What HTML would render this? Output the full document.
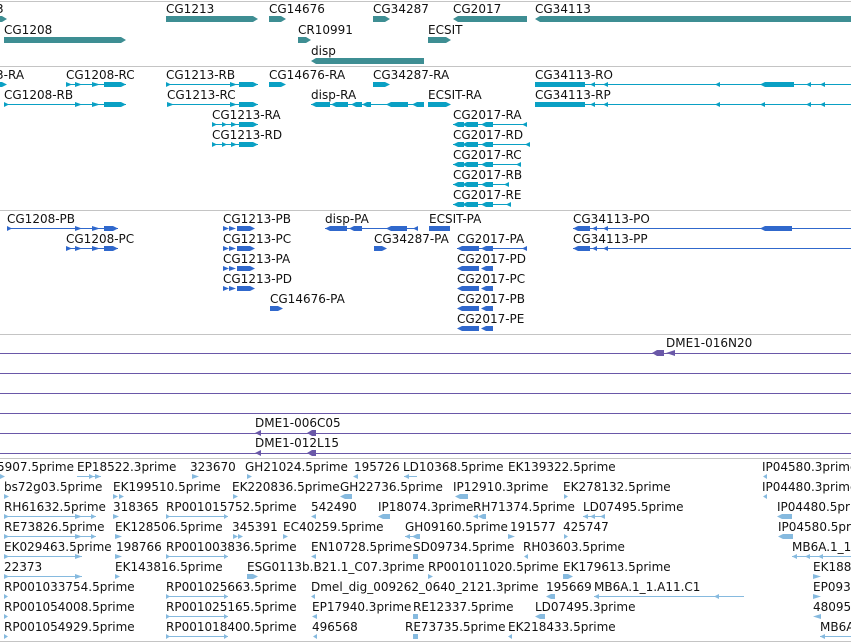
<!DOCTYPE html>
<html><head><meta charset="utf-8"><style>
html,body{margin:0;padding:0;overflow:hidden}
body{width:851px;height:642px;background:#fff}
#w{position:relative;width:851px;height:642px;overflow:hidden}
.t{position:absolute;font:12px/12px "DejaVu Sans",sans-serif;color:#111;white-space:nowrap}
.b{position:absolute;height:5px}
.h{height:6px}
.l{position:absolute;height:1px}
.s{position:absolute;left:0;width:851px;height:1px;background:#c4c4c4}
.u{position:absolute;left:0;width:851px;height:1px;background:#6a58a8}
.g{background:#3e8e93}.c{background:#0aa0c4}.p{background:#3068cc}.e{background:#86badf}.v{background:#6a58a8}
.r{clip-path:polygon(0 0,calc(100% - 5px) 0,100% 50%,calc(100% - 5px) 100%,0 100%)}
.f{clip-path:polygon(5px 0,100% 0,100% 100%,5px 100%,0 50%)}
.ar{clip-path:polygon(0 0,100% 50%,0 100%)}
.al{clip-path:polygon(100% 0,0 50%,100% 100%)}
</style></head><body><div id="w">
<div class="s" style="top:1px"></div>
<div class="s" style="top:66px"></div>
<div class="s" style="top:210px"></div>
<div class="s" style="top:334px"></div>
<div class="s" style="top:458px"></div>
<div class="s" style="top:641px"></div>

<div class="t" style="left:-4px;top:3px">3</div><i class="b h g r" style="left:0;top:16px;width:7px"></i>
<div class="t" style="left:166px;top:3px">CG1213</div><i class="b h g r" style="left:166px;top:16px;width:92px"></i>
<div class="t" style="left:269px;top:3px">CG14676</div><i class="b h g r" style="left:269px;top:16px;width:17px"></i>
<div class="t" style="left:373px;top:3px">CG34287</div><i class="b h g r" style="left:373px;top:16px;width:17px"></i>
<div class="t" style="left:453px;top:3px">CG2017</div><i class="b h g f" style="left:453px;top:16px;width:74px"></i>
<div class="t" style="left:535px;top:3px">CG34113</div><i class="b h g f" style="left:535px;top:16px;width:316px"></i>
<div class="t" style="left:4px;top:24px">CG1208</div><i class="b h g r" style="left:4px;top:37px;width:122px"></i>
<div class="t" style="left:298px;top:24px">CR10991</div><i class="b h g r" style="left:298px;top:37px;width:13px"></i>
<div class="t" style="left:428px;top:24px">ECSIT</div><i class="b h g r" style="left:428px;top:37px;width:23px"></i>
<div class="t" style="left:311px;top:45px">disp</div><i class="b h g f" style="left:311px;top:58px;width:113px"></i>

<div class="t" style="left:-4px;top:69px">3-RA</div><i class="b c r" style="left:0;top:82px;width:7px"></i>
<div class="t" style="left:66px;top:69px">CG1208-RC</div>
<i class="l c" style="left:66px;top:84px;width:60px"></i><i class="b c ar" style="left:66px;top:82px;width:6px"></i><i class="b c ar" style="left:75px;top:82px;width:7px"></i><i class="b c ar" style="left:92px;top:82px;width:8px"></i><i class="b c r" style="left:104px;top:82px;width:22px"></i>
<div class="t" style="left:166px;top:69px">CG1213-RB</div>
<i class="l c" style="left:166px;top:84px;width:92px"></i><i class="b c ar" style="left:166px;top:82px;width:5px"></i><i class="b c ar" style="left:230px;top:82px;width:7px"></i><i class="b c r" style="left:239px;top:82px;width:19px"></i>
<div class="t" style="left:269px;top:69px">CG14676-RA</div><i class="b c r" style="left:269px;top:82px;width:17px"></i>
<div class="t" style="left:373px;top:69px">CG34287-RA</div><i class="b c r" style="left:373px;top:82px;width:17px"></i>
<div class="t" style="left:535px;top:69px">CG34113-RO</div>
<i class="l c" style="left:535px;top:84px;width:316px"></i><i class="b c" style="left:535px;top:82px;width:50px"></i><i class="b c al" style="left:590px;top:82px;width:5px"></i><i class="b c al" style="left:603px;top:82px;width:5px"></i><i class="b c al" style="left:715px;top:82px;width:5px"></i><i class="b c f" style="left:760px;top:82px;width:34px"></i><i class="b c al" style="left:806px;top:82px;width:5px"></i><i class="b c al" style="left:820px;top:82px;width:5px"></i>

<div class="t" style="left:4px;top:89px">CG1208-RB</div>
<i class="l c" style="left:4px;top:104px;width:122px"></i><i class="b c ar" style="left:4px;top:102px;width:5px"></i><i class="b c ar" style="left:75px;top:102px;width:7px"></i><i class="b c ar" style="left:92px;top:102px;width:8px"></i><i class="b c r" style="left:104px;top:102px;width:22px"></i>
<div class="t" style="left:167px;top:89px">CG1213-RC</div>
<i class="l c" style="left:167px;top:104px;width:91px"></i><i class="b c ar" style="left:167px;top:102px;width:7px"></i><i class="b c ar" style="left:230px;top:102px;width:7px"></i><i class="b c r" style="left:239px;top:102px;width:19px"></i>
<div class="t" style="left:311px;top:89px">disp-RA</div>
<i class="l c" style="left:311px;top:104px;width:113px"></i><i class="b c f" style="left:311px;top:102px;width:19px"></i><i class="b c f" style="left:331px;top:102px;width:17px"></i><i class="b c f" style="left:351px;top:102px;width:11px"></i><i class="b c f" style="left:362px;top:102px;width:9px"></i><i class="b c f" style="left:386px;top:102px;width:22px"></i><i class="b c f" style="left:412px;top:102px;width:12px"></i>
<div class="t" style="left:428px;top:89px">ECSIT-RA</div><i class="b c r" style="left:428px;top:102px;width:23px"></i>
<div class="t" style="left:535px;top:89px">CG34113-RP</div>
<i class="l c" style="left:535px;top:104px;width:316px"></i><i class="b c" style="left:535px;top:102px;width:50px"></i><i class="b c al" style="left:590px;top:102px;width:5px"></i><i class="b c al" style="left:603px;top:102px;width:5px"></i><i class="b c al" style="left:715px;top:102px;width:5px"></i><i class="b c al" style="left:760px;top:102px;width:5px"></i><i class="b c al" style="left:806px;top:102px;width:5px"></i><i class="b c al" style="left:820px;top:102px;width:5px"></i>

<div class="t" style="left:212px;top:109px">CG1213-RA</div>
<i class="l c" style="left:212px;top:124px;width:46px"></i><i class="b c ar" style="left:212px;top:122px;width:5px"></i><i class="b c ar" style="left:222px;top:122px;width:5px"></i><i class="b c ar" style="left:231px;top:122px;width:6px"></i><i class="b c r" style="left:239px;top:122px;width:19px"></i>
<div class="t" style="left:212px;top:129px">CG1213-RD</div>
<i class="l c" style="left:212px;top:144px;width:46px"></i><i class="b c ar" style="left:212px;top:142px;width:5px"></i><i class="b c ar" style="left:222px;top:142px;width:5px"></i><i class="b c ar" style="left:231px;top:142px;width:6px"></i><i class="b c r" style="left:239px;top:142px;width:19px"></i>

<div class="t" style="left:453px;top:109px">CG2017-RA</div><i class="l c" style="left:453px;top:124px;width:74px"></i><i class="b c f" style="left:453px;top:122px;width:11px"></i><i class="b c f" style="left:462px;top:122px;width:16px"></i><i class="b c f" style="left:481px;top:122px;width:12px"></i><i class="b c al" style="left:522px;top:122px;width:5px"></i>
<div class="t" style="left:453px;top:129px">CG2017-RD</div><i class="l c" style="left:453px;top:144px;width:77px"></i><i class="b c f" style="left:453px;top:142px;width:11px"></i><i class="b c f" style="left:462px;top:142px;width:16px"></i><i class="b c f" style="left:481px;top:142px;width:12px"></i><i class="b c al" style="left:525px;top:142px;width:5px"></i>
<div class="t" style="left:453px;top:149px">CG2017-RC</div><i class="l c" style="left:453px;top:164px;width:68px"></i><i class="b c f" style="left:453px;top:162px;width:11px"></i><i class="b c f" style="left:462px;top:162px;width:16px"></i><i class="b c f" style="left:481px;top:162px;width:12px"></i><i class="b c al" style="left:516px;top:162px;width:5px"></i>
<div class="t" style="left:453px;top:169px">CG2017-RB</div><i class="l c" style="left:453px;top:184px;width:56px"></i><i class="b c f" style="left:453px;top:182px;width:11px"></i><i class="b c f" style="left:462px;top:182px;width:16px"></i><i class="b c f" style="left:481px;top:182px;width:12px"></i><i class="b c al" style="left:504px;top:182px;width:5px"></i>
<div class="t" style="left:453px;top:189px">CG2017-RE</div><i class="l c" style="left:453px;top:204px;width:58px"></i><i class="b c f" style="left:453px;top:202px;width:11px"></i><i class="b c f" style="left:462px;top:202px;width:16px"></i><i class="b c f" style="left:481px;top:202px;width:12px"></i><i class="b c al" style="left:506px;top:202px;width:5px"></i>

<div class="t" style="left:7px;top:213px">CG1208-PB</div>
<i class="l p" style="left:7px;top:228px;width:111px"></i><i class="b p ar" style="left:7px;top:226px;width:5px"></i><i class="b p ar" style="left:75px;top:226px;width:7px"></i><i class="b p ar" style="left:92px;top:226px;width:8px"></i><i class="b p r" style="left:104px;top:226px;width:14px"></i>
<div class="t" style="left:223px;top:213px">CG1213-PB</div><i class="b p ar" style="left:223px;top:226px;width:6px"></i><i class="b p ar" style="left:229px;top:226px;width:7px"></i><i class="b p r" style="left:237px;top:226px;width:18px"></i>
<div class="t" style="left:325px;top:213px">disp-PA</div><i class="l p" style="left:325px;top:228px;width:93px"></i><i class="b p f" style="left:325px;top:226px;width:22px"></i><i class="b p f" style="left:349px;top:226px;width:13px"></i><i class="b p f" style="left:386px;top:226px;width:21px"></i><i class="b p al" style="left:413px;top:226px;width:5px"></i>
<div class="t" style="left:429px;top:213px">ECSIT-PA</div><i class="b p" style="left:429px;top:226px;width:21px"></i>
<div class="t" style="left:573px;top:213px">CG34113-PO</div><i class="l p" style="left:573px;top:228px;width:278px"></i><i class="b p f" style="left:573px;top:226px;width:17px"></i><i class="b p al" style="left:592px;top:226px;width:5px"></i><i class="b p al" style="left:603px;top:226px;width:5px"></i><i class="b p f" style="left:760px;top:226px;width:32px"></i>

<div class="t" style="left:66px;top:233px">CG1208-PC</div>
<i class="l p" style="left:66px;top:248px;width:52px"></i><i class="b p ar" style="left:66px;top:246px;width:6px"></i><i class="b p ar" style="left:75px;top:246px;width:7px"></i><i class="b p ar" style="left:92px;top:246px;width:8px"></i><i class="b p r" style="left:104px;top:246px;width:14px"></i>
<div class="t" style="left:223px;top:233px">CG1213-PC</div><i class="b p ar" style="left:223px;top:246px;width:6px"></i><i class="b p ar" style="left:229px;top:246px;width:7px"></i><i class="b p r" style="left:237px;top:246px;width:18px"></i>
<div class="t" style="left:374px;top:233px">CG34287-PA</div><i class="b p r" style="left:374px;top:246px;width:13px"></i>
<div class="t" style="left:457px;top:233px">CG2017-PA</div><i class="l p" style="left:457px;top:248px;width:70px"></i><i class="b p f" style="left:457px;top:246px;width:22px"></i><i class="b p f" style="left:481px;top:246px;width:12px"></i><i class="b p al" style="left:522px;top:246px;width:5px"></i>
<div class="t" style="left:573px;top:233px">CG34113-PP</div><i class="l p" style="left:573px;top:248px;width:278px"></i><i class="b p f" style="left:573px;top:246px;width:17px"></i><i class="b p al" style="left:592px;top:246px;width:5px"></i><i class="b p al" style="left:603px;top:246px;width:5px"></i>

<div class="t" style="left:223px;top:253px">CG1213-PA</div><i class="b p ar" style="left:223px;top:266px;width:6px"></i><i class="b p ar" style="left:229px;top:266px;width:7px"></i><i class="b p r" style="left:237px;top:266px;width:18px"></i>
<div class="t" style="left:457px;top:253px">CG2017-PD</div><i class="b p f" style="left:457px;top:266px;width:22px"></i><i class="b p f" style="left:481px;top:266px;width:12px"></i>
<div class="t" style="left:223px;top:273px">CG1213-PD</div><i class="b p ar" style="left:223px;top:286px;width:6px"></i><i class="b p ar" style="left:229px;top:286px;width:7px"></i><i class="b p r" style="left:237px;top:286px;width:18px"></i>
<div class="t" style="left:457px;top:273px">CG2017-PC</div><i class="b p f" style="left:457px;top:286px;width:22px"></i><i class="b p f" style="left:481px;top:286px;width:12px"></i>
<div class="t" style="left:270px;top:293px">CG14676-PA</div><i class="b p r" style="left:270px;top:306px;width:13px"></i>
<div class="t" style="left:457px;top:293px">CG2017-PB</div><i class="b p f" style="left:457px;top:306px;width:22px"></i><i class="b p f" style="left:481px;top:306px;width:12px"></i>
<div class="t" style="left:457px;top:313px">CG2017-PE</div><i class="b p f" style="left:457px;top:326px;width:22px"></i><i class="b p f" style="left:481px;top:326px;width:12px"></i>

<div class="u" style="top:353px"></div><div class="u" style="top:373px"></div><div class="u" style="top:393px"></div><div class="u" style="top:413px"></div><div class="u" style="top:433px"></div><div class="u" style="top:453px"></div>
<div class="t" style="left:666px;top:337px">DME1-016N20</div><i class="b h v f" style="left:652px;top:350px;width:12px"></i><i class="b h v al" style="left:666px;top:350px;width:9px"></i>
<div class="t" style="left:255px;top:417px">DME1-006C05</div><i class="b h v al" style="left:255px;top:430px;width:6px"></i><i class="b h v f" style="left:307px;top:430px;width:9px"></i>
<div class="t" style="left:255px;top:437px">DME1-012L15</div><i class="b h v al" style="left:255px;top:450px;width:6px"></i><i class="b h v f" style="left:307px;top:450px;width:9px"></i>

<div class="t" style="left:-3px;top:461px">5907.5prime</div><i class="b e ar" style="left:0;top:474px;width:5px"></i>
<div class="t" style="left:77px;top:461px">EP18522.3prime</div><i class="l e" style="left:77px;top:476px;width:24px"></i><i class="b e ar" style="left:89px;top:474px;width:5px"></i><i class="b e ar" style="left:95px;top:474px;width:6px"></i>
<div class="t" style="left:190px;top:461px">323670</div><i class="b e ar" style="left:192px;top:474px;width:7px"></i>
<div class="t" style="left:245px;top:461px">GH21024.5prime</div><i class="b e ar" style="left:247px;top:474px;width:5px"></i>
<div class="t" style="left:354px;top:461px">195726</div><i class="b e al" style="left:353px;top:474px;width:5px"></i>
<div class="t" style="left:403px;top:461px">LD10368.5prime</div><i class="l e" style="left:404px;top:476px;width:13px"></i><i class="b e al" style="left:404px;top:474px;width:5px"></i>
<div class="t" style="left:508px;top:461px">EK139322.5prime</div>
<div class="t" style="left:762px;top:461px">IP04580.3prime</div><i class="b e al" style="left:763px;top:474px;width:4px"></i>

<div class="t" style="left:4px;top:481px">bs72g03.5prime</div><i class="b e ar" style="left:4px;top:494px;width:5px"></i>
<div class="t" style="left:113px;top:481px">EK199510.5prime</div><i class="b e ar" style="left:113px;top:494px;width:5px"></i><i class="b e ar" style="left:119px;top:494px;width:5px"></i>
<div class="t" style="left:232px;top:481px">EK220836.5prime</div><i class="b e ar" style="left:233px;top:494px;width:5px"></i>
<div class="t" style="left:340px;top:481px">GH22736.5prime</div><i class="b e f" style="left:340px;top:494px;width:12px"></i>
<div class="t" style="left:453px;top:481px">IP12910.3prime</div><i class="b e f" style="left:455px;top:494px;width:13px"></i>
<div class="t" style="left:563px;top:481px">EK278132.5prime</div><i class="b e ar" style="left:564px;top:494px;width:4px"></i>
<div class="t" style="left:762px;top:481px">IP04480.3prime</div><i class="b e al" style="left:763px;top:494px;width:4px"></i>

<div class="t" style="left:4px;top:501px">RH61632.5prime</div><i class="l e" style="left:4px;top:516px;width:92px"></i><i class="b e ar" style="left:4px;top:514px;width:5px"></i><i class="b e ar" style="left:75px;top:514px;width:7px"></i><i class="b e ar" style="left:91px;top:514px;width:5px"></i>
<div class="t" style="left:113px;top:501px">318365</div><i class="b e ar" style="left:113px;top:514px;width:6px"></i>
<div class="t" style="left:166px;top:501px">RP001015752.5prime</div><i class="l e" style="left:166px;top:516px;width:62px"></i><i class="b e ar" style="left:166px;top:514px;width:4px"></i><i class="b e ar" style="left:224px;top:514px;width:4px"></i>
<div class="t" style="left:311px;top:501px">542490</div><i class="b e al" style="left:311px;top:514px;width:5px"></i>
<div class="t" style="left:378px;top:501px">IP18074.3prime</div><i class="b e f" style="left:378px;top:514px;width:12px"></i>
<div class="t" style="left:473px;top:501px">RH71374.5prime</div><i class="b e al" style="left:473px;top:514px;width:5px"></i><i class="b e f" style="left:478px;top:514px;width:8px"></i>
<div class="t" style="left:583px;top:501px">LD07495.5prime</div><i class="l e" style="left:583px;top:516px;width:22px"></i><i class="b e al" style="left:583px;top:514px;width:5px"></i><i class="b e al" style="left:590px;top:514px;width:5px"></i><i class="b e al" style="left:600px;top:514px;width:5px"></i>
<div class="t" style="left:777px;top:501px">IP04480.5prime</div><i class="b e f" style="left:777px;top:514px;width:15px"></i>

<div class="t" style="left:4px;top:521px">RE73826.5prime</div><i class="l e" style="left:4px;top:536px;width:92px"></i><i class="b e ar" style="left:4px;top:534px;width:5px"></i><i class="b e ar" style="left:75px;top:534px;width:7px"></i><i class="b e ar" style="left:91px;top:534px;width:5px"></i>
<div class="t" style="left:115px;top:521px">EK128506.5prime</div><i class="b e ar" style="left:115px;top:534px;width:7px"></i>
<div class="t" style="left:232px;top:521px">345391</div><i class="b e ar" style="left:233px;top:534px;width:5px"></i><i class="b e ar" style="left:238px;top:534px;width:5px"></i>
<div class="t" style="left:283px;top:521px">EC40259.5prime</div><i class="b e ar" style="left:283px;top:534px;width:5px"></i>
<div class="t" style="left:405px;top:521px">GH09160.5prime</div><i class="l e" style="left:405px;top:536px;width:14px"></i><i class="b e al" style="left:405px;top:534px;width:5px"></i><i class="b e f" style="left:412px;top:534px;width:8px"></i>
<div class="t" style="left:510px;top:521px">191577</div><i class="b e ar" style="left:508px;top:534px;width:7px"></i>
<div class="t" style="left:563px;top:521px">425747</div><i class="b e ar" style="left:564px;top:534px;width:4px"></i>
<div class="t" style="left:778px;top:521px">IP04580.5prime</div><i class="b e f" style="left:778px;top:534px;width:15px"></i>

<div class="t" style="left:4px;top:541px">EK029463.5prime</div><i class="l e" style="left:4px;top:556px;width:78px"></i><i class="b e ar" style="left:4px;top:554px;width:5px"></i><i class="b e ar" style="left:75px;top:554px;width:7px"></i>
<div class="t" style="left:116px;top:541px">198766</div><i class="b e ar" style="left:115px;top:554px;width:7px"></i>
<div class="t" style="left:166px;top:541px">RP001003836.5prime</div><i class="l e" style="left:166px;top:556px;width:62px"></i><i class="b e ar" style="left:166px;top:554px;width:4px"></i><i class="b e ar" style="left:224px;top:554px;width:4px"></i>
<div class="t" style="left:311px;top:541px">EN10728.5prime</div><i class="b e al" style="left:311px;top:554px;width:5px"></i>
<div class="t" style="left:413px;top:541px">SD09734.5prime</div><i class="b e" style="left:413px;top:554px;width:5px"></i>
<div class="t" style="left:523px;top:541px">RH03603.5prime</div><i class="b e al" style="left:524px;top:554px;width:4px"></i>
<div class="t" style="left:792px;top:541px">MB6A.1_1.A11.C1</div><i class="l e" style="left:792px;top:556px;width:59px"></i><i class="b e al" style="left:792px;top:554px;width:5px"></i><i class="b e al" style="left:805px;top:554px;width:5px"></i><i class="b e al" style="left:818px;top:554px;width:5px"></i>

<div class="t" style="left:4px;top:561px">22373</div><i class="l e" style="left:4px;top:576px;width:78px"></i><i class="b e ar" style="left:4px;top:574px;width:5px"></i><i class="b e ar" style="left:75px;top:574px;width:7px"></i>
<div class="t" style="left:115px;top:561px">EK143816.5prime</div><i class="b e ar" style="left:115px;top:574px;width:5px"></i>
<div class="t" style="left:247px;top:561px">ESG0113b.B21.1_C07.3prime</div><i class="b e r" style="left:247px;top:574px;width:11px"></i>
<div class="t" style="left:428px;top:561px">RP001011020.5prime</div><i class="b e ar" style="left:428px;top:574px;width:5px"></i>
<div class="t" style="left:563px;top:561px">EK179613.5prime</div><i class="b e r" style="left:563px;top:574px;width:10px"></i>
<div class="t" style="left:813px;top:561px">EK188</div><i class="b e ar" style="left:813px;top:574px;width:8px"></i>

<div class="t" style="left:4px;top:581px">RP001033754.5prime</div><i class="b e ar" style="left:4px;top:594px;width:4px"></i>
<div class="t" style="left:166px;top:581px">RP001025663.5prime</div><i class="l e" style="left:166px;top:596px;width:62px"></i><i class="b e ar" style="left:166px;top:594px;width:4px"></i><i class="b e ar" style="left:224px;top:594px;width:4px"></i>
<div class="t" style="left:311px;top:581px">Dmel_dig_009262_0640_2121.3prime</div><i class="b e al" style="left:311px;top:594px;width:4px"></i>
<div class="t" style="left:546px;top:581px">195669</div><i class="b e f" style="left:546px;top:594px;width:9px"></i>
<div class="t" style="left:594px;top:581px">MB6A.1_1.A11.C1</div><i class="l e" style="left:594px;top:596px;width:150px"></i><i class="b e al" style="left:594px;top:594px;width:5px"></i><i class="b e al" style="left:714px;top:594px;width:5px"></i>
<div class="t" style="left:813px;top:581px">EP093</div><i class="b e ar" style="left:813px;top:594px;width:8px"></i>

<div class="t" style="left:4px;top:601px">RP001054008.5prime</div><i class="b e ar" style="left:4px;top:614px;width:4px"></i>
<div class="t" style="left:166px;top:601px">RP001025165.5prime</div><i class="l e" style="left:166px;top:616px;width:62px"></i><i class="b e ar" style="left:166px;top:614px;width:4px"></i><i class="b e ar" style="left:224px;top:614px;width:4px"></i>
<div class="t" style="left:312px;top:601px">EP17940.3prime</div><i class="b e al" style="left:312px;top:614px;width:5px"></i>
<div class="t" style="left:413px;top:601px">RE12337.5prime</div><i class="b e" style="left:413px;top:614px;width:5px"></i>
<div class="t" style="left:535px;top:601px">LD07495.3prime</div><i class="b e f" style="left:535px;top:614px;width:10px"></i>
<div class="t" style="left:813px;top:601px">48095</div><i class="b e al" style="left:813px;top:614px;width:8px"></i>

<div class="t" style="left:4px;top:621px">RP001054929.5prime</div><i class="b e ar" style="left:4px;top:634px;width:4px"></i>
<div class="t" style="left:166px;top:621px">RP001018400.5prime</div><i class="l e" style="left:166px;top:636px;width:62px"></i><i class="b e ar" style="left:166px;top:634px;width:4px"></i><i class="b e ar" style="left:224px;top:634px;width:4px"></i>
<div class="t" style="left:312px;top:621px">496568</div><i class="b e al" style="left:313px;top:634px;width:4px"></i>
<div class="t" style="left:405px;top:621px">RE73735.5prime</div><i class="b e" style="left:413px;top:634px;width:5px"></i>
<div class="t" style="left:508px;top:621px">EK218433.5prime</div><i class="b e al" style="left:508px;top:634px;width:4px"></i>
<div class="t" style="left:820px;top:621px">MB6A</div><i class="l e" style="left:820px;top:636px;width:31px"></i><i class="b e al" style="left:820px;top:634px;width:5px"></i>
</div></body></html>
